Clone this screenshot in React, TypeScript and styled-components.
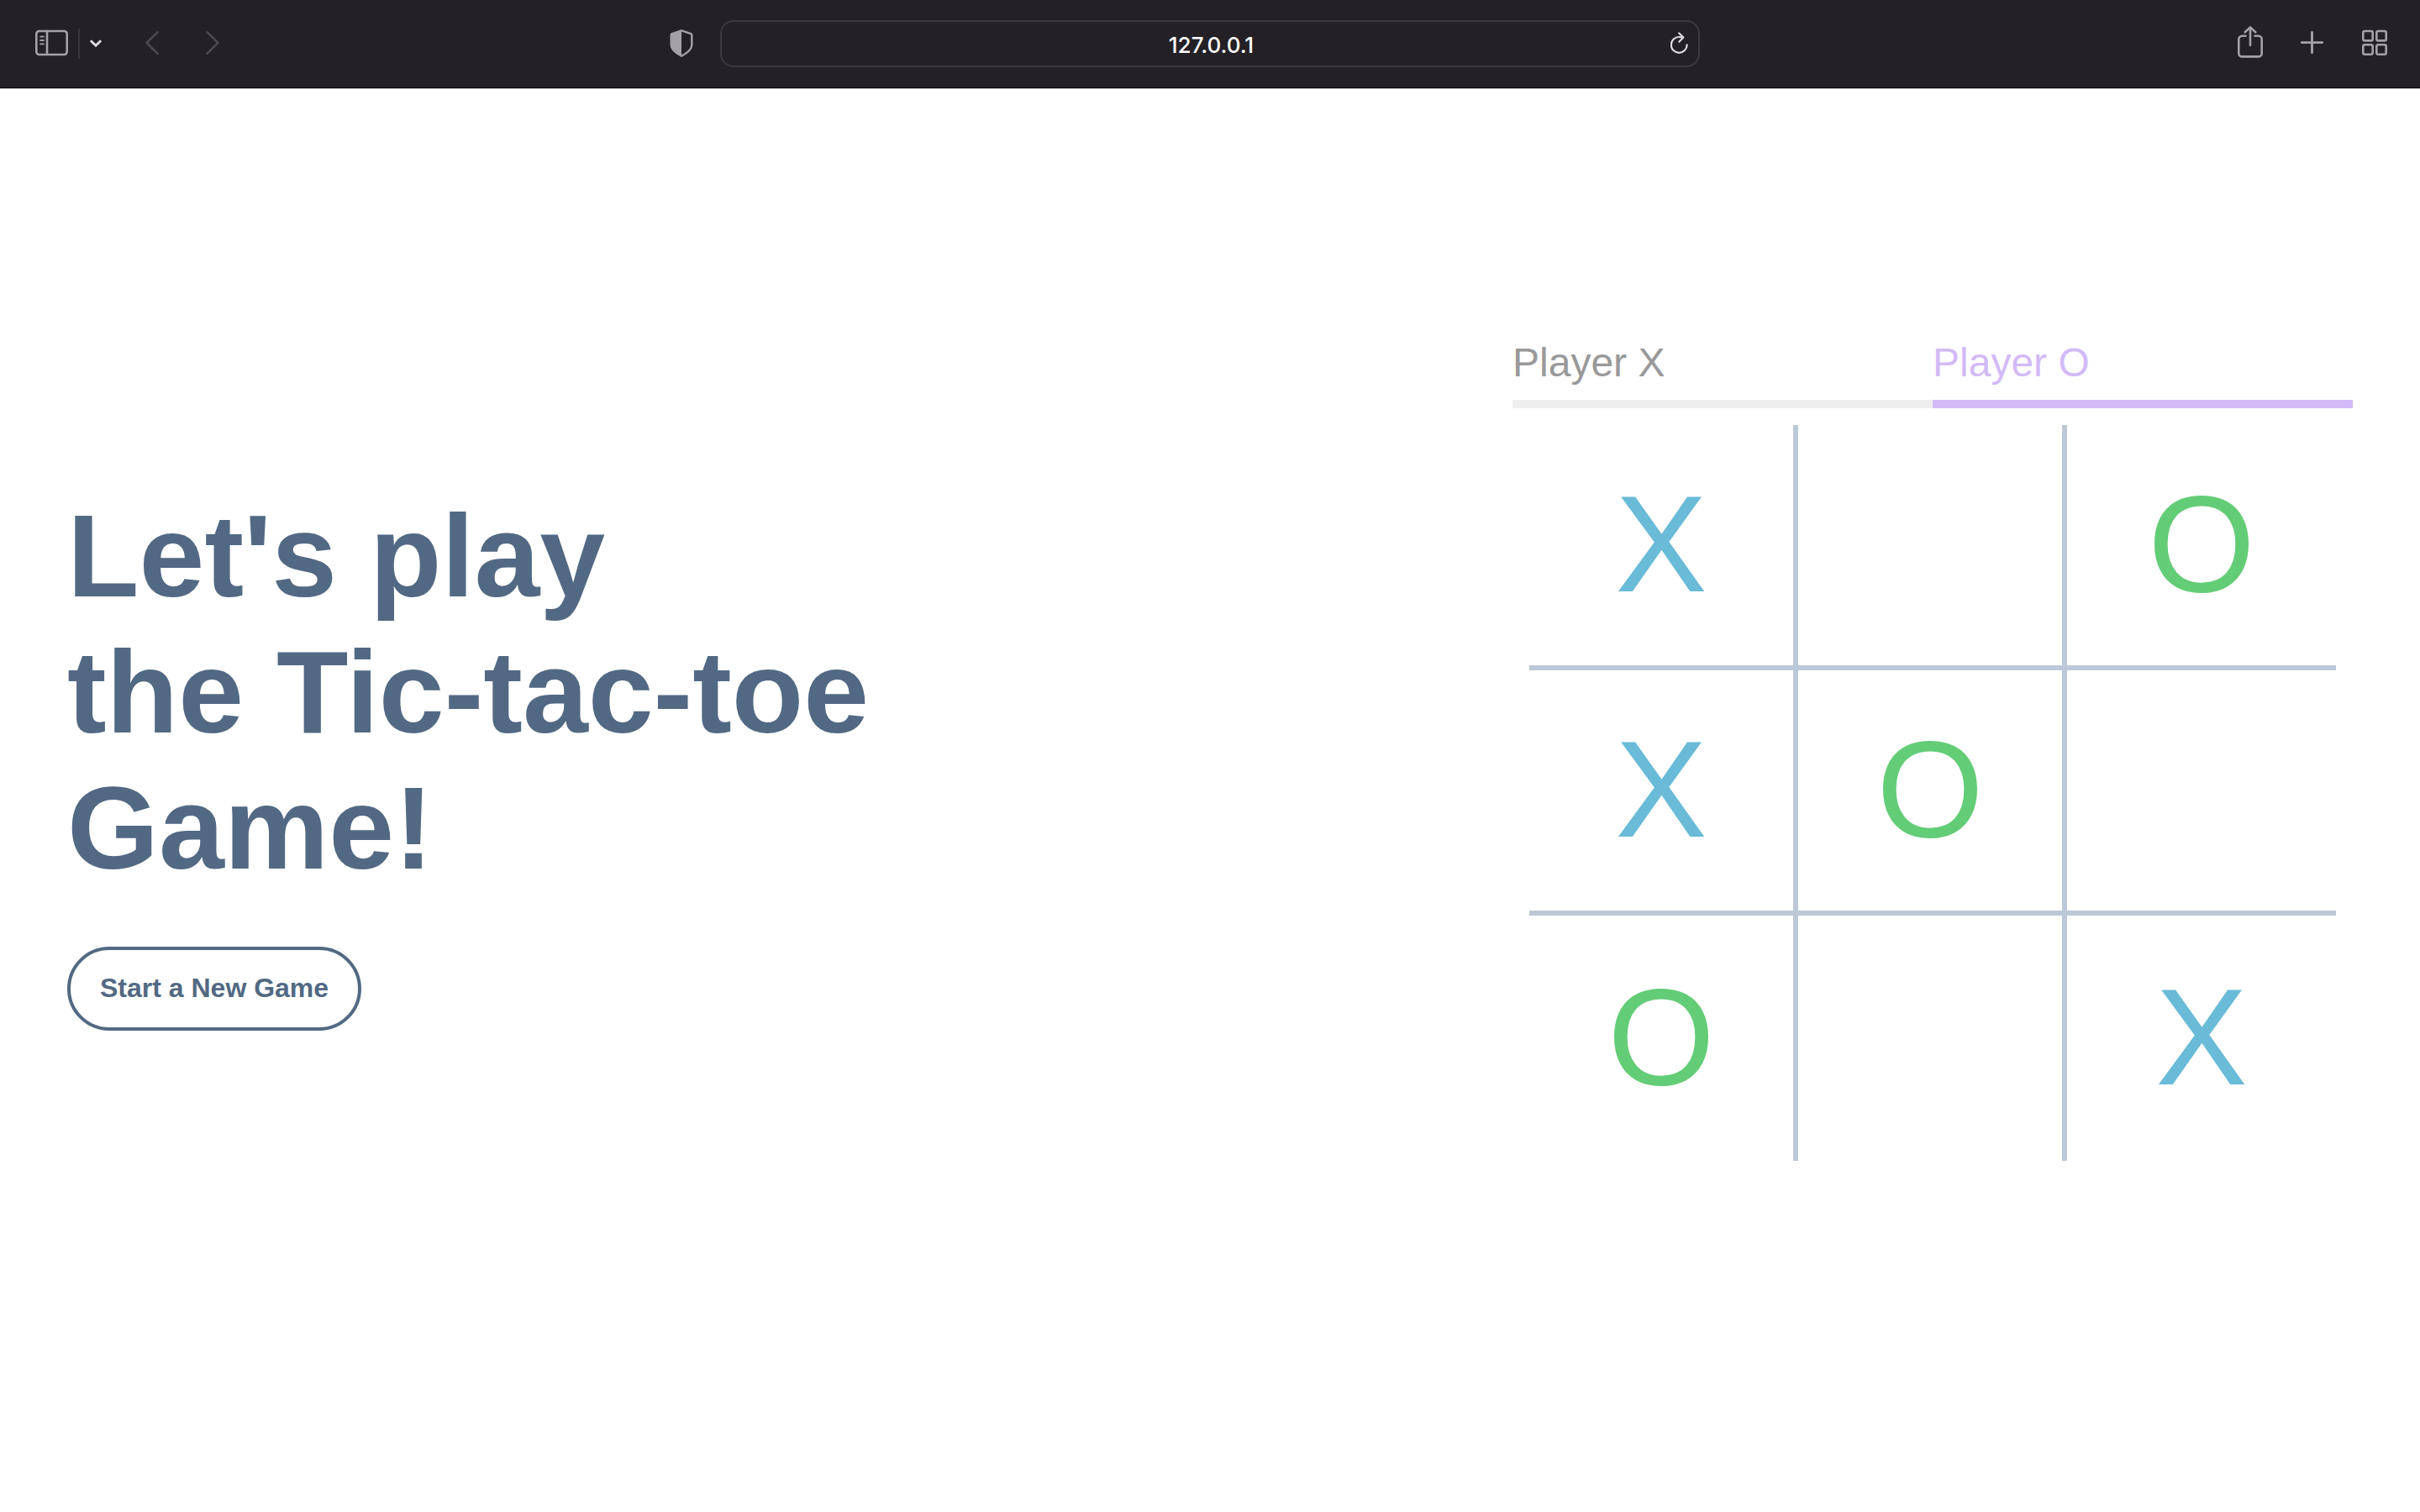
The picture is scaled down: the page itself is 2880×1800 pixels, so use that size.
import React from "react";
import styled, { createGlobalStyle } from "styled-components";

const colors = {
  chrome: "#232126",
  chromeLine: "#3b393e",
  icon: "#a4a2a7",
  iconStrong: "#dddbe0",
  iconDisabled: "#4b494e",
  ink: "#526983",
  line: "#bcc8d8",
  x: "#69bbd7",
  o: "#63cc77",
  active: "#d2baf7",
  idle: "#999999",
  idleBar: "#eeeeee",
};

const GlobalStyle = createGlobalStyle`
  *, *::before, *::after { box-sizing: border-box; }
  html, body, #root { height: 100%; }
  body {
    margin: 0;
    background: #fff;
    font-family: "Liberation Sans", Arial, Helvetica, sans-serif;
  }
  button, input { font: inherit; color: inherit; }
`;

const Page = styled.div`
  display: flex;
  flex-direction: column;
  min-height: 100%;
`;

const Toolbar = styled.header`
  display: grid;
  grid-template-columns: 1fr minmax(0, 1166px) 1fr;
  align-items: center;
  height: 105px;
  background: ${colors.chrome};
  border-bottom: 1px solid #000;
  box-shadow: 0 1px 0 #b4b4b4;
`;

const ToolbarStart = styled.div`
  display: flex;
  align-items: center;
  padding: 0 32px 0 42px;
`;

const SidebarControls = styled.div`
  display: flex;
  align-items: center;
  gap: 12px;
`;

const HistoryControls = styled.nav`
  display: flex;
  gap: 56px;
  margin-left: 52px;
  margin-right: auto;
`;

const ToolbarEnd = styled.div`
  display: flex;
  justify-content: flex-end;
  gap: 44px;
  padding-right: 39px;
`;

const Separator = styled.span`
  width: 2px;
  height: 36px;
  background: #38363b;
`;

const IconButton = styled.button<{ $color?: string }>`
  display: flex;
  padding: 0;
  border: 0;
  background: none;
  color: ${(p) => p.$color ?? colors.icon};
  cursor: pointer;
`;

const AddressBar = styled.form`
  display: flex;
  align-items: center;
  height: 56px;
  padding: 0 12px 0 36px;
  border: 2px solid ${colors.chromeLine};
  border-radius: 16px;
`;

const AddressInput = styled.input`
  flex: 1;
  min-width: 0;
  height: 100%;
  padding: 2px 0 0;
  border: 0;
  outline: 0;
  background: none;
  color: #fff;
  font-family: Inter, Roboto, sans-serif;
  font-size: 26px;
  font-weight: 500;
  text-align: center;
`;

const Main = styled.main`
  flex: 1;
  display: flex;
  align-items: center;
  justify-content: space-between;
  gap: 80px;
  padding: 0 80px 97px;
`;

const Title = styled.h1`
  margin: 0 0 60px;
  color: ${colors.ink};
  font-size: 140px;
  font-weight: 700;
  line-height: 162px;
`;

const StartButton = styled.button`
  height: 100px;
  padding: 0 35px 2px;
  border: 4px solid ${colors.ink};
  border-radius: 50px;
  background: none;
  color: ${colors.ink};
  font-size: 32px;
  font-weight: 700;
  line-height: 36px;
  cursor: pointer;
`;

const Game = styled.section`
  flex: 0 1 1000px;
`;

const Players = styled.div`
  display: grid;
  grid-template-columns: 1fr 1fr;
`;

const Player = styled.div<{ $active?: boolean }>`
  padding-bottom: 18px;
  border-bottom: 10px solid ${(p) => (p.$active ? colors.active : colors.idleBar)};
  color: ${(p) => (p.$active ? colors.active : colors.idle)};
  font-size: 48px;
  line-height: 52px;
`;

const Board = styled.div`
  display: grid;
  grid-template-columns: repeat(3, 1fr);
  grid-auto-rows: 292px;
  margin: 20px;
`;

const Cell = styled.button<{ $mark: string }>`
  padding: 0 0 2px;
  border: 0 solid ${colors.line};
  border-width: 0 6px 6px 0;
  background: none;
  color: ${(p) => (p.$mark === "X" ? colors.x : colors.o)};
  font-size: 164px;
  line-height: 184px;
  cursor: pointer;

  &:nth-child(3n) {
    border-right-width: 0;
  }
  &:nth-child(n + 7) {
    border-bottom-width: 0;
  }
`;

type IconProps = { width: number; children: React.ReactNode; strokeWidth?: number };

const Icon = ({ width, children, strokeWidth = 2.6 }: IconProps) => (
  <svg
    width={width}
    height={42}
    viewBox={`0 0 ${width} 42`}
    fill="none"
    stroke="currentColor"
    strokeWidth={strokeWidth}
    strokeLinecap="round"
    strokeLinejoin="round"
    aria-hidden="true"
  >
    {children}
  </svg>
);

const SidebarIcon = () => (
  <Icon width={39}>
    <rect x="1.3" y="6" width="36.4" height="28" rx="3.5" />
    <path d="M14 6v27.5" />
    <path strokeWidth="1.8" d="M6 12.6h4M6 17h4M6 21.3h4" />
  </Icon>
);

const ChevronDownIcon = () => (
  <Icon width={14} strokeWidth={3}>
    <path d="M1.8 18.2 7 23.3l5.2-5.1" />
  </Icon>
);

const BackIcon = () => (
  <Icon width={16}>
    <path d="M14.5 7.3 1.5 20l13 12.7" />
  </Icon>
);

const ForwardIcon = () => (
  <Icon width={16}>
    <path d="M1.5 7.3 14.5 20l-13 12.7" />
  </Icon>
);

const ShieldIcon = () => (
  <Icon width={28} strokeWidth={2.4}>
    <path d="M14 5.3 25.2 9.2q1.100.4 1.100 1.600v11.900c0 5.200-4.600 8.800-12.300 13C6.300 31.500 1.700 27.900 1.700 22.700V10.800Q1.700 9.600 2.800 9.200z" />
    <path fill="currentColor" stroke="none" d="M14 5 2.500 9.200v17L14 36z" />
  </Icon>
);

const ReloadIcon = () => (
  <Icon width={21} strokeWidth={2.2}>
    <path d="M19.600 22.300a9.400 9.400 0 1 1-9.400-9.300q2.400 0 4.800.5" />
    <path d="M10.200 8.500 15.300 13.500l-5 5.200" />
  </Icon>
);

const ShareIcon = () => (
  <Icon width={30}>
    <path d="M9.500 11.700H5.300a4 4 0 0 0-4 4v16.700a4 4 0 0 0 4 4h19.400a4 4 0 0 0 4-4V15.700a4 4 0 0 0-4-4h-4.200" />
    <path d="M15 23V1.600M8.800 7.300 15 1.400l6.200 5.900" />
  </Icon>
);

const PlusIcon = () => (
  <Icon width={30} strokeWidth={2.9}>
    <path d="M14.500 7.400v24.400M2.300 19.600h24.400" />
  </Icon>
);

const GridIcon = () => (
  <Icon width={30}>
    <rect x="1.300" y="6" width="11.400" height="11.400" rx="2" />
    <rect x="17.300" y="6" width="11.400" height="11.400" rx="2" />
    <rect x="1.300" y="22.300" width="11.400" height="11.400" rx="2" />
    <rect x="17.300" y="22.300" width="11.400" height="11.400" rx="2" />
  </Icon>
);

const marks = ["X", "", "O", "X", "O", "", "O", "", "X"];

export default function App() {
  return (
    <Page>
      <GlobalStyle />
      <Toolbar>
        <ToolbarStart>
          <SidebarControls>
            <IconButton type="button" aria-label="Show sidebar">
              <SidebarIcon />
            </IconButton>
            <Separator />
            <IconButton type="button" aria-label="Tab groups" $color={colors.iconStrong}>
              <ChevronDownIcon />
            </IconButton>
          </SidebarControls>
          <HistoryControls aria-label="History">
            <IconButton type="button" aria-label="Back" $color={colors.iconDisabled}>
              <BackIcon />
            </IconButton>
            <IconButton type="button" aria-label="Forward" $color={colors.iconDisabled}>
              <ForwardIcon />
            </IconButton>
          </HistoryControls>
          <IconButton type="button" aria-label="Privacy report">
            <ShieldIcon />
          </IconButton>
        </ToolbarStart>
        <AddressBar onSubmit={(e) => e.preventDefault()}>
          <AddressInput type="text" aria-label="Address" defaultValue="127.0.0.1" />
          <IconButton type="button" aria-label="Reload" $color={colors.iconStrong}>
            <ReloadIcon />
          </IconButton>
        </AddressBar>
        <ToolbarEnd>
          <IconButton type="button" aria-label="Share">
            <ShareIcon />
          </IconButton>
          <IconButton type="button" aria-label="New tab">
            <PlusIcon />
          </IconButton>
          <IconButton type="button" aria-label="Tab overview">
            <GridIcon />
          </IconButton>
        </ToolbarEnd>
      </Toolbar>
      <Main>
        <section>
          <Title>
            Let's play
            <br />
            the Tic-tac-toe
            <br />
            Game!
          </Title>
          <StartButton type="button">Start a New Game</StartButton>
        </section>
        <Game>
          <Players>
            <Player>Player X</Player>
            <Player $active>Player O</Player>
          </Players>
          <Board>
            {marks.map((mark, i) => (
              <Cell key={i} type="button" $mark={mark} aria-label={`Square ${i + 1} ${mark}`}>
                {mark}
              </Cell>
            ))}
          </Board>
        </Game>
      </Main>
    </Page>
  );
}
